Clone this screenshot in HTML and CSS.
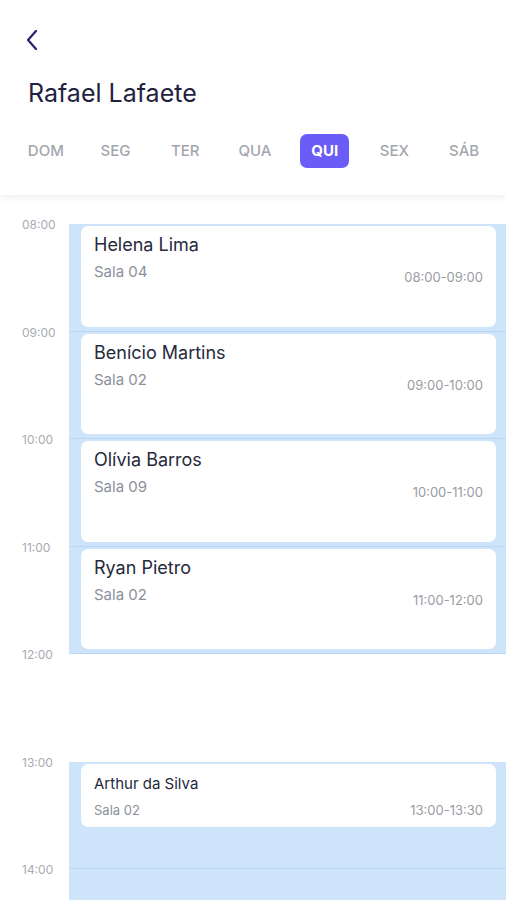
FILE: index.html
```html
<!DOCTYPE html>
<html lang="pt-BR">
<head>
<meta charset="UTF-8">
<meta name="viewport" content="width=device-width, initial-scale=1.0">
<title>Agenda - Rafael Lafaete</title>
<link rel="stylesheet" href="styles.css">
</head>
<body>

<header class="topbar">
  <button class="back" type="button" aria-label="Voltar">
    <svg width="14" height="22" viewBox="0 0 14 22"><path d="M11 2 L3 11 L11 20" fill="none" stroke="#24236e" stroke-width="2.2" stroke-linecap="round" stroke-linejoin="round"/></svg>
  </button>
  <h1 class="title">Rafael Lafaete</h1>
  <nav class="days">
    <span class="day">DOM</span>
    <span class="day">SEG</span>
    <span class="day">TER</span>
    <span class="day">QUA</span>
    <span class="day active">QUI</span>
    <span class="day">SEX</span>
    <span class="day">SÁB</span>
  </nav>
</header>

<main class="timeline">
  <div class="slot">
    <div class="hour">08:00</div>
    <div class="track busy">
      <div class="card">
        <div class="name">Helena Lima</div>
        <div class="info"><span class="room">Sala 04</span><span class="time">08:00-09:00</span></div>
      </div>
    </div>
  </div>
  <div class="slot">
    <div class="hour">09:00</div>
    <div class="track busy">
      <div class="card">
        <div class="name">Benício Martins</div>
        <div class="info"><span class="room">Sala 02</span><span class="time">09:00-10:00</span></div>
      </div>
    </div>
  </div>
  <div class="slot">
    <div class="hour">10:00</div>
    <div class="track busy">
      <div class="card">
        <div class="name">Olívia Barros</div>
        <div class="info"><span class="room">Sala 09</span><span class="time">10:00-11:00</span></div>
      </div>
    </div>
  </div>
  <div class="slot">
    <div class="hour">11:00</div>
    <div class="track busy">
      <div class="card">
        <div class="name">Ryan Pietro</div>
        <div class="info"><span class="room">Sala 02</span><span class="time">11:00-12:00</span></div>
      </div>
    </div>
  </div>
  <div class="slot">
    <div class="hour">12:00</div>
    <div class="track"></div>
  </div>
  <div class="slot">
    <div class="hour">13:00</div>
    <div class="track busy">
      <div class="card small">
        <div class="name">Arthur da Silva</div>
        <div class="info"><span class="room">Sala 02</span><span class="time">13:00-13:30</span></div>
      </div>
    </div>
  </div>
  <div class="slot">
    <div class="hour">14:00</div>
    <div class="track busy"></div>
  </div>
</main>

</body>
</html>
```

FILE: styles.css
```css
body {
  margin: 0;
  font-family: Inter, "Noto Sans", sans-serif;
  background-color: #fff;
  color: #22253a;
  overflow: hidden;
}
.topbar {
  height: 195px;
  box-sizing: border-box;
  padding-top: 29px;
  background-color: #fff;
  box-shadow: 0 2px 8px rgba(0, 0, 0, 0.07);
  position: relative;
  z-index: 1;
}
.back {
  display: block;
  margin-left: 25px;
  padding: 0;
  border: none;
  background: none;
  width: 14px;
  height: 22px;
}
.back svg {
  display: block;
}
.title {
  margin: 27px 0 0 28px;
  font-size: 25px;
  font-weight: 400;
  line-height: 30px;
  color: #1f2340;
}
.days {
  display: grid;
  grid-template-columns: repeat(7, 1fr);
  padding: 0 7px 0 11px;
  margin-top: 26px;
  align-items: center;
}
.day {
  justify-self: center;
  font-size: 15px;
  font-weight: 500;
  color: #a4a6ae;
  line-height: 34px;
  padding: 0 11px;
  border-radius: 7px;
}
.day.active {
  background-color: #6a5cf7;
  color: #fff;
  font-weight: 700;
}
.timeline {
  padding-top: 29px;
}
.slot {
  display: grid;
  grid-template-columns: 69px 1fr;
  height: 107.5px;
}
.hour {
  font-size: 12px;
  line-height: 14px;
  color: #a9abb2;
  padding-left: 22px;
  margin-top: -6px;
}
.track {
  box-sizing: border-box;
}
.track.busy {
  background-color: #cde4fb;
  border-bottom: 1px solid #b9d6f4;
  padding: 2px 10px 4px 12px;
}
.card {
  box-sizing: border-box;
  height: 100%;
  background-color: #fff;
  border-radius: 7px;
  padding: 9px 13px 0 13px;
}
.name {
  font-size: 18px;
  line-height: 20px;
  color: #262a3c;
}
.info {
  display: flex;
  justify-content: space-between;
  margin-top: 8px;
}
.room {
  font-size: 15px;
  line-height: 18px;
  color: #8c909b;
}
.time {
  font-size: 13px;
  line-height: 18px;
  color: #9a9ca4;
  margin-top: 5px;
}
.card.small {
  height: 63px;
  padding-top: 10px;
}
.card.small .name {
  font-size: 15px;
}
.card.small .info {
  margin-top: 7px;
}
.card.small .room {
  font-size: 13px;
}
.card.small .time {
  font-size: 13px;
  margin-top: 0;
}
```
